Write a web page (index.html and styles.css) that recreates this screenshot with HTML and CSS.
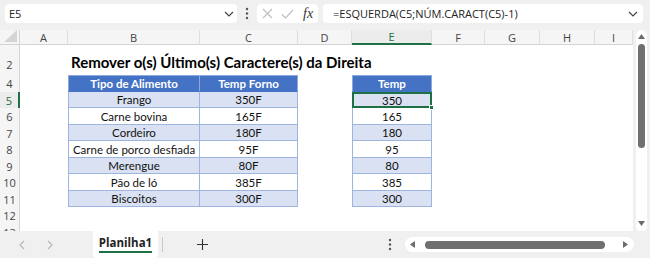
FILE: index.html
```html
<!DOCTYPE html>
<html lang="pt">
<head>
<meta charset="utf-8">
<title>Planilha</title>
<link rel="stylesheet" href="styles.css">
</head>
<body>
<div class="app">
  <div class="topbar">
    <div class="namebox">
      <span class="nb-text">E5</span>
      <svg class="chev" width="10" height="6" viewBox="0 0 10 6"><path d="M1 1 L5 5 L9 1" fill="none" stroke="#444" stroke-width="1.2"/></svg>
    </div>
    <svg class="vdots" width="4" height="13" viewBox="0 0 4 13"><circle cx="2" cy="2" r="1.2" fill="#555"/><circle cx="2" cy="6.5" r="1.2" fill="#555"/><circle cx="2" cy="11" r="1.2" fill="#555"/></svg>
    <div class="fbtns">
      <svg width="11" height="11" viewBox="0 0 11 11"><path d="M1 1 L10 10 M10 1 L1 10" stroke="#bdbdbd" stroke-width="1.1" fill="none"/></svg>
      <svg width="13" height="10" viewBox="0 0 13 10"><path d="M1 5.5 L4.5 9 L12 1" stroke="#bdbdbd" stroke-width="1.1" fill="none"/></svg>
      <span class="fx">fx</span>
    </div>
    <div class="formula">
      <span class="f-text">=ESQUERDA(C5;NÚM.CARACT(C5)-1)</span>
      <svg class="chev" width="10" height="6" viewBox="0 0 10 6"><path d="M1 1 L5 5 L9 1" fill="none" stroke="#444" stroke-width="1.2"/></svg>
    </div>
  </div>

  <div class="main">
    <div class="grid">
      <div class="corner"><svg width="13" height="12" viewBox="0 0 13 12"><polygon points="13,0 13,12 0,12" fill="#d4d4d4"/></svg></div>
      <div class="ch">A</div><div class="ch">B</div><div class="ch">C</div><div class="ch">D</div><div class="ch ch-sel">E</div><div class="ch">F</div><div class="ch">G</div><div class="ch">H</div><div class="ch">I</div>

      <div class="rh rh-tall">2</div><div class="c"></div><div class="c title">Remover o(s) Último(s) Caractere(s) da Direita</div><div class="c"></div><div class="c"></div><div class="c"></div><div class="c"></div><div class="c"></div><div class="c"></div><div class="c"></div>

      <div class="rh">4</div><div class="c"></div><div class="t hd tl">Tipo de Alimento</div><div class="t hd">Temp Forno</div><div class="c"></div><div class="t hd tl">Temp</div><div class="c"></div><div class="c"></div><div class="c"></div><div class="c"></div>

      <div class="rh rh-sel">5</div><div class="c"></div><div class="t band tl">Frango</div><div class="t band">350F</div><div class="c"></div><div class="t band tl sel">350<span class="handle"></span></div><div class="c"></div><div class="c"></div><div class="c"></div><div class="c"></div>

      <div class="rh">6</div><div class="c"></div><div class="t tl">Carne bovina</div><div class="t">165F</div><div class="c"></div><div class="t tl">165</div><div class="c"></div><div class="c"></div><div class="c"></div><div class="c"></div>

      <div class="rh">7</div><div class="c"></div><div class="t band tl">Cordeiro</div><div class="t band">180F</div><div class="c"></div><div class="t band tl">180</div><div class="c"></div><div class="c"></div><div class="c"></div><div class="c"></div>

      <div class="rh">8</div><div class="c"></div><div class="t tl">Carne de porco desfiada</div><div class="t">95F</div><div class="c"></div><div class="t tl">95</div><div class="c"></div><div class="c"></div><div class="c"></div><div class="c"></div>

      <div class="rh">9</div><div class="c"></div><div class="t band tl">Merengue</div><div class="t band">80F</div><div class="c"></div><div class="t band tl">80</div><div class="c"></div><div class="c"></div><div class="c"></div><div class="c"></div>

      <div class="rh">10</div><div class="c"></div><div class="t tl">Pão de ló</div><div class="t">385F</div><div class="c"></div><div class="t tl">385</div><div class="c"></div><div class="c"></div><div class="c"></div><div class="c"></div>

      <div class="rh">11</div><div class="c"></div><div class="t band tl">Biscoitos</div><div class="t band">300F</div><div class="c"></div><div class="t band tl">300</div><div class="c"></div><div class="c"></div><div class="c"></div><div class="c"></div>

      <div class="rh">12</div><div class="c"></div><div class="c"></div><div class="c"></div><div class="c"></div><div class="c"></div><div class="c"></div><div class="c"></div><div class="c"></div><div class="c"></div>

      <div class="rh">13</div><div class="c"></div><div class="c"></div><div class="c"></div><div class="c"></div><div class="c"></div><div class="c"></div><div class="c"></div><div class="c"></div><div class="c"></div>
    </div>

    <div class="vscroll">
      <div class="vtrack">
        <svg class="arrow" width="7" height="5" viewBox="0 0 7 5"><polygon points="3.5,0 7,5 0,5" fill="#6b6b6b"/></svg>
        <div class="vthumb"></div>
        <div class="spacer"></div>
        <svg class="arrow" width="7" height="5" viewBox="0 0 7 5"><polygon points="0,0 7,0 3.5,5" fill="#6b6b6b"/></svg>
      </div>
    </div>
  </div>

  <div class="bottombar">
    <div class="nav">
      <svg width="6" height="10" viewBox="0 0 6 10"><path d="M5 1 L1 5 L5 9" fill="none" stroke="#b5b5b5" stroke-width="1.1"/></svg>
      <svg width="6" height="10" viewBox="0 0 6 10"><path d="M1 1 L5 5 L1 9" fill="none" stroke="#b5b5b5" stroke-width="1.1"/></svg>
    </div>
    <div class="tab"><span class="tab-label">Planilha1</span></div>
    <div class="tab-sep"></div>
    <svg class="plus" width="11" height="11" viewBox="0 0 11 11"><path d="M5.5 0 V11 M0 5.5 H11" stroke="#333" stroke-width="1.1"/></svg>
    <div class="flex-fill"></div>
    <svg class="hdots" width="4" height="13" viewBox="0 0 4 13"><circle cx="2" cy="2" r="1.2" fill="#555"/><circle cx="2" cy="6.5" r="1.2" fill="#555"/><circle cx="2" cy="11" r="1.2" fill="#555"/></svg>
    <div class="htrack">
      <svg width="5" height="7" viewBox="0 0 5 7"><polygon points="0,3.5 5,0 5,7" fill="#6b6b6b"/></svg>
      <div class="hthumb"></div>
      <div class="spacer"></div>
      <svg width="5" height="7" viewBox="0 0 5 7"><polygon points="5,3.5 0,0 0,7" fill="#6b6b6b"/></svg>
    </div>
  </div>
</div>
</body>
</html>
```

FILE: styles.css
```css
* { box-sizing: border-box; }

html, body {
  margin: 0;
  padding: 0;
  width: 650px;
  height: 258px;
  overflow: hidden;
  background: #f0f0f0;
}

.app {
  width: 650px;
  height: 258px;
  display: flex;
  flex-direction: column;
  font-family: "Open Sans", "Noto Sans", sans-serif;
  color: #222;
}

/* ---------- top bar ---------- */
.topbar {
  height: 30px;
  flex: none;
  display: flex;
  align-items: flex-start;
  padding: 4px 0 0 5px;
  background: #f0f0f0;
}

.namebox {
  width: 232px;
  height: 19px;
  background: #fff;
  border-radius: 4px;
  display: flex;
  align-items: center;
  justify-content: space-between;
  padding: 0 3px 0 4px;
}

.nb-text, .f-text {
  font-size: 11px;
  color: #222;
}

.vdots {
  margin: 3px 0 0 8px;
}

.fbtns {
  margin-left: 8px;
  width: 61px;
  height: 19px;
  background: #fff;
  border-radius: 4px;
  display: flex;
  align-items: center;
  padding-left: 5px;
  gap: 8px;
}

.fx {
  font-family: "Liberation Serif", "DejaVu Serif", serif;
  font-style: italic;
  font-size: 14px;
  color: #333;
  margin-left: 1px;
  line-height: 1;
}

.formula {
  margin-left: 5px;
  width: 320px;
  height: 19px;
  background: #fff;
  border-radius: 4px;
  display: flex;
  align-items: center;
  justify-content: space-between;
  padding: 0 5px 0 10px;
}

/* ---------- grid ---------- */
.main {
  height: 201px;
  flex: none;
  display: flex;
}

.grid {
  width: 633px;
  height: 201px;
  overflow: hidden;
  background: #fff;
  display: grid;
  grid-template-columns: 20px 48px 132px 98px 54px 80px 53px 55px 55px 38px;
  grid-template-rows: 15px 30px 17px 16px 17px 16px 17px 16px 17px 16px 17px 16px 17px;
  font-family: "Lato", "Liberation Sans", sans-serif;
  font-size: 11.5px;
  color: #111;
}

.corner {
  background: #f5f5f5;
  border-right: 1px solid #d4d4d4;
  border-bottom: 1px solid #d4d4d4;
  display: flex;
  align-items: flex-end;
  justify-content: flex-end;
  padding: 0 2px 2px 0;
}

.ch {
  background: #f5f5f5;
  border-right: 1px solid #dedede;
  border-bottom: 1px solid #d4d4d4;
  display: flex;
  align-items: center;
  justify-content: center;
  font-family: "Open Sans", "Noto Sans", sans-serif;
  font-size: 11px;
  color: #444;
}

.ch-sel {
  color: #1e6e42;
  border-bottom: 2px solid #1e7145;
  background: #ececec;
}

.rh {
  background: #f5f5f5;
  border-right: 1px solid #d4d4d4;
  display: flex;
  align-items: center;
  justify-content: center;
  font-family: "Open Sans", "Noto Sans", sans-serif;
  font-size: 11px;
  color: #444;
}

.rh-tall {
  align-items: flex-end;
  padding-bottom: 3px;
}

.rh-sel {
  color: #1e6e42;
  border-right: 2px solid #1e7145;
  background: #ececec;
}

.c {
  min-width: 0;
}

.title {
  white-space: nowrap;
  font-weight: 700;
  font-size: 15px;
  color: #000;
  display: flex;
  align-items: flex-end;
  padding: 0 0 4px 3px;
  overflow: visible;
}

/* ---------- tables ---------- */
.t {
  display: flex;
  align-items: center;
  justify-content: center;
  white-space: nowrap;
  border-right: 1px solid #9db5df;
  border-bottom: 1px solid #9db5df;
  background: #fff;
}

.tl {
  border-left: 1px solid #9db5df;
}

.band {
  background: #d9e1f2;
}

.hd {
  background: #4472c4;
  color: #fff;
  font-weight: 700;
  border-color: #8eaadb;
  border-top: 1px solid #8eaadb;
  border-bottom-color: #4472c4;
}

.sel {
  position: relative;
  border: 2px solid #1e7145;
}

.handle {
  position: absolute;
  right: -4px;
  bottom: -4px;
  width: 5px;
  height: 5px;
  background: #1e7145;
  border: 1px solid #fff;
}

/* ---------- vertical scrollbar ---------- */
.vscroll {
  width: 17px;
  height: 201px;
  padding-left: 3px;
  padding-right: 3px;
  background: #f0f0f0;
}

.vtrack {
  width: 11px;
  height: 202px;
  background: #fff;
  border-radius: 6px;
  display: flex;
  flex-direction: column;
  align-items: center;
  padding: 4px 0 6px;
}

.vthumb {
  margin-top: 5px;
  width: 7px;
  height: 104px;
  background: #6f6f6f;
  border-radius: 4px;
}

.spacer { flex: 1; }

/* ---------- bottom bar ---------- */
.bottombar {
  height: 27px;
  flex: none;
  display: flex;
  align-items: center;
  background: #f0f0f0;
}

.nav {
  width: 93px;
  display: flex;
  align-items: center;
  padding-left: 19px;
  gap: 22px;
}

.tab {
  align-self: stretch;
  width: 65px;
  background: #fff;
  border-radius: 0 0 4px 4px;
  display: flex;
  align-items: flex-start;
  justify-content: center;
  padding-top: 5px;
}

.tab-label {
  font-family: "Open Sans", "Noto Sans", sans-serif;
  font-weight: 700;
  font-size: 11.5px;
  color: #222;
  line-height: 14px;
  padding-bottom: 1px;
  border-bottom: 2px solid #1e7145;
}

.tab-sep {
  margin-left: 4px;
  width: 1px;
  height: 15px;
  background: #c8c8c8;
}

.plus {
  margin-left: 34px;
}

.flex-fill { flex: 1; }

.hdots {
  margin-right: 13px;
}

.htrack {
  width: 229px;
  height: 15px;
  margin-right: 16px;
  background: #fff;
  border-radius: 8px;
  display: flex;
  align-items: center;
  padding: 0 6px 0 5px;
}

.hthumb {
  margin-left: 10px;
  width: 180px;
  height: 8px;
  background: #6f6f6f;
  border-radius: 4px;
}
```
